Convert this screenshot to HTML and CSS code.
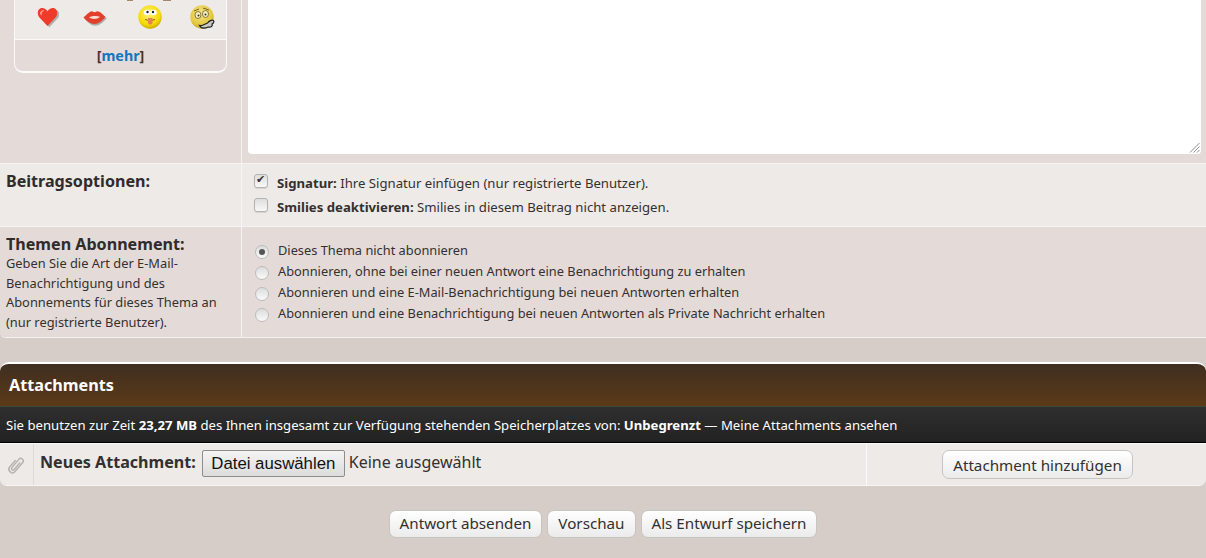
FILE: index.html
```html
<!DOCTYPE html>
<html lang="de">

<head>
    <meta charset="UTF-8">
    <title>Antwort erstellen</title>
    <link rel="stylesheet" href="styles.css">
</head>

<body>

    <div class="form-panel">
        <div class="form-row row-editor">
            <div class="cell-label">
                <div class="smilies">
                    <div class="smilies-top">
                        <svg class="smilie-cut" width="44" height="2" viewBox="0 0 44 2">
                            <rect x="0" y="0" width="6" height="1" fill="#a08c68"/>
                            <rect x="36" y="0" width="8" height="1" fill="#a08c68"/>
                        </svg>
                        <div class="smilies-list">
                            <svg class="smilie smilie-heart" width="22" height="21" viewBox="0 0 22 21">
                                <path d="M11.500 20 3 11C0 7 2 2.500 6 2.500 8.500 2.500 10.500 4 11.500 6 12.500 4 14.500 2.500 17 2.500 21 2.500 23 7 20 11Z" fill="#8c9490" opacity=".65" transform="translate(.8 .3)"/>
                                <path d="M10.500 19 2 10C-.5 6.500 1 1 5 1 7.500 1 9.500 2.500 10.500 4.500 11.500 2.500 13.500 1 16 1 20 1 21.500 6.500 19 10Z" fill="#ee3b2c"/>
                                <path d="M3 7C3 4 5.500 2.500 7.500 3.500 5.500 4 4.500 6 4.500 8.500Z" fill="#fb9c8c"/>
                            </svg>
                            <svg class="smilie smilie-lips" width="24" height="17" viewBox="0 0 24 17">
                                <path d="M1.500 9C5 5.500 8 2 10 3 11.500 4 12.500 4 14 3 16 2 20 5.500 23.500 8.500 20 12.500 16 16 12 16 8 16 4 12.500 1.500 9Z" fill="#8c9490" opacity=".7" transform="translate(.3 .8)"/>
                                <path d="M.5 8.500C4.500 5 7.500 1.500 9.500 2.500 11 3.500 12 3.500 13.500 2.500 15.500 1.500 19.500 5 22.500 8 19 12 15.500 15 11.500 15 7.500 15 3.500 12 .5 8.500Z" fill="#e2402c"/>
                                <path d="M6 8.500C8.500 6.500 14 6.500 17 8 14 10.500 9 10.500 6 8.500Z" fill="#fbdcd0"/>
                            </svg>
                            <svg class="smilie smilie-tongue" width="24" height="24" viewBox="0 0 24 24">
                                <defs>
                                    <radialGradient id="faceTongue" cx=".45" cy=".35" r=".7">
                                        <stop offset="0" stop-color="#fff27a"/>
                                        <stop offset=".7" stop-color="#f5d800"/>
                                        <stop offset="1" stop-color="#c09c00"/>
                                    </radialGradient>
                                </defs>
                                <circle cx="12" cy="12" r="11.700" fill="url(#faceTongue)"/>
                                <ellipse cx="9" cy="7.500" rx="3.200" ry="2.800" fill="#fff"/>
                                <ellipse cx="15.500" cy="7.500" rx="3.200" ry="2.800" fill="#fff"/>
                                <circle cx="9.500" cy="7" r="1.200" fill="#222"/>
                                <circle cx="15" cy="7" r="1.200" fill="#222"/>
                                <path d="M7 14.500C9 15.500 15 15.500 17 14.500" stroke="#8a6a00" stroke-width="1" fill="none"/>
                                <path d="M10 13H14.500L14.500 18.500C13.500 20 11 20 10 18.500Z" fill="#e88050"/>
                            </svg>
                            <svg class="smilie smilie-think" width="25" height="24" viewBox="0 0 25 24">
                                <defs>
                                    <radialGradient id="faceThink" cx=".45" cy=".35" r=".7">
                                        <stop offset="0" stop-color="#f0e48c"/>
                                        <stop offset=".7" stop-color="#e6c83c"/>
                                        <stop offset="1" stop-color="#b89a20"/>
                                    </radialGradient>
                                </defs>
                                <circle cx="12" cy="12" r="11.700" fill="url(#faceThink)"/>
                                <ellipse cx="8" cy="10" rx="3" ry="3.500" fill="#f4f0c0" stroke="#6e5a20" stroke-width=".8"/>
                                <ellipse cx="15.500" cy="9" rx="3" ry="3.500" fill="#f4f0c0" stroke="#6e5a20" stroke-width=".8"/>
                                <circle cx="8.500" cy="10.500" r="1" fill="#333"/>
                                <circle cx="15.500" cy="9.500" r="1" fill="#333"/>
                                <path d="M4 6 9 4M13 3 19 5" stroke="#7a6420" stroke-width="1" fill="none"/>
                                <path d="M9.500 20.500C12 21.500 15 19 17.500 18 19 16 22 14.500 23.500 15.500 24.500 17 23 18.500 22 19 23 21 21 22.500 18.500 22 15 23.500 11 23.500 9.500 20.500Z" fill="#c8c8c4" stroke="#222" stroke-width="1.200"/>
                            </svg>
                        </div>
                    </div>
                    <div class="smilies-more">[<a href="#">mehr</a>]</div>
                </div>
            </div>
            <div class="cell-value editor-cell">
                <div class="editor-box">
                    <svg class="resize-grip" width="11" height="11" viewBox="0 0 11 11">
                        <path d="M10.500 1 1 10.500M10.500 4.500 4.500 10.500M10.500 8 8 10.500" stroke="#8d8d8d" stroke-width="1"/>
                    </svg>
                </div>
            </div>
        </div>

        <div class="form-row row-light row-options">
            <div class="cell-label">
                <h3 class="field-title">Beitragsoptionen:</h3>
            </div>
            <div class="cell-value options-cell">
                <label class="check-line"><input type="checkbox" checked><span><b>Signatur:</b> Ihre Signatur einfügen (nur registrierte Benutzer).</span></label>
                <label class="check-line"><input type="checkbox"><span><b>Smilies deaktivieren:</b> Smilies in diesem Beitrag nicht anzeigen.</span></label>
            </div>
        </div>

        <div class="form-row row-subscribe">
            <div class="cell-label">
                <h3 class="field-title">Themen Abonnement:</h3>
                <p class="field-help">Geben Sie die Art der E-Mail-Benachrichtigung und des Abonnements für dieses Thema an (nur registrierte Benutzer).</p>
            </div>
            <div class="cell-value radios-cell">
                <label class="radio-line"><input type="radio" name="sub" checked><span>Dieses Thema nicht abonnieren</span></label>
                <label class="radio-line"><input type="radio" name="sub"><span>Abonnieren, ohne bei einer neuen Antwort eine Benachrichtigung zu erhalten</span></label>
                <label class="radio-line"><input type="radio" name="sub"><span>Abonnieren und eine E-Mail-Benachrichtigung bei neuen Antworten erhalten</span></label>
                <label class="radio-line"><input type="radio" name="sub"><span>Abonnieren und eine Benachrichtigung bei neuen Antworten als Private Nachricht erhalten</span></label>
            </div>
        </div>
    </div>

    <div class="attach-panel">
        <div class="attach-head">Attachments</div>
        <div class="attach-info">Sie benutzen zur Zeit <b>23,27 MB</b> des Ihnen insgesamt zur Verfügung stehenden Speicherplatzes von: <b>Unbegrenzt</b> — Meine Attachments ansehen</div>
        <div class="attach-row">
            <div class="attach-icon">
                <svg width="20" height="22" viewBox="0 0 20 22">
                    <g transform="rotate(40 10 11)">
                        <path d="M6.500 8V17C6.500 21 13.500 21 13.500 17V5C13.500 1.500 8.500 1.500 8.500 5V16C8.500 17.500 11.500 17.500 11.500 16V7" fill="none" stroke="#b7b4b1" stroke-width="1.500" stroke-linecap="round"/>
                    </g>
                </svg>
            </div>
            <div class="attach-field">
                <b class="attach-label">Neues Attachment:</b>
                <button class="file-button" type="button">Datei auswählen</button>
                <span class="file-name">Keine ausgewählt</span>
            </div>
            <div class="attach-action">
                <button class="soft-button" type="button">Attachment hinzufügen</button>
            </div>
        </div>
    </div>

    <div class="form-actions">
        <button class="soft-button" type="button">Antwort absenden</button>
        <button class="soft-button" type="button">Vorschau</button>
        <button class="soft-button" type="button">Als Entwurf speichern</button>
    </div>

</body>

</html>
```

FILE: styles.css
```css
body {
    margin: 0;
    height: 558px;
    overflow: hidden;
    background-color: #d6ccc8;
    color: #34302f;
    font-family: 'Noto Sans', sans-serif;
    font-size: 12.800px;
}

.form-panel {
    border-bottom: 1px solid #f4f1ef;
    border-bottom-left-radius: 6px;
    overflow: hidden;
}

.form-row {
    display: flex;
    background-color: #e4dbd9;
    border-bottom: 1px solid #f6f3f1;
}

.form-row:last-child {
    border-bottom: none;
}

.row-light {
    background-color: #eeeae7;
}

.cell-label {
    box-sizing: border-box;
    width: 242px;
    flex-shrink: 0;
    padding: 8px 6px;
    border-right: 1px solid #f6f3f1;
}

.cell-value {
    flex: 1;
}

.row-editor {
    height: 163px;
}

.row-editor .cell-label {
    padding: 0 14px;
}

.smilies {
    height: 73px;
    box-sizing: border-box;
    border: 1px solid #fbfaf9;
    border-top: none;
    border-bottom-width: 2px;
    border-radius: 0 0 9px 9px;
    overflow: hidden;
}

.smilies-top {
    position: relative;
    height: 40px;
    background-color: #eeeae7;
    border-bottom: 1px solid #fbfaf9;
    box-sizing: border-box;
}

.smilie-cut {
    position: absolute;
    left: 112px;
    top: 0;
}

.smilies-list {
    position: absolute;
    top: 5px;
    left: 22px;
    display: flex;
    align-items: center;
    height: 24px;
}

.smilie-heart {
    margin-right: 24px;
}

.smilie-lips {
    margin-right: 31px;
}

.smilie-tongue {
    margin-right: 28px;
}

.smilies-more {
    text-align: center;
    font-size: 14.300px;
    font-weight: bold;
    line-height: 31px;
    color: #4a3327;
}

.smilies-more a {
    color: #0f76c0;
    text-decoration: none;
}

.editor-cell {
    padding: 0 5px 9px 6px;
}

.editor-box {
    position: relative;
    height: 100%;
    background-color: #fff;
    border-radius: 0 0 4px 4px;
}

.resize-grip {
    position: absolute;
    right: 1px;
    bottom: 1px;
}

.row-options {
    height: 62px;
}

.row-options .cell-label {
    padding-top: 7px;
}

.field-title {
    margin: 0;
    font-size: 16.100px;
    line-height: 21px;
    font-weight: bold;
    color: #302c2b;
}

.row-subscribe {
    height: 110px;
}

.row-subscribe .cell-label {
    padding-top: 7px;
}

.field-help {
    margin: -1px 0 0;
    line-height: 19.500px;
    font-size: 12.850px;
}

.options-cell {
    padding: 7px 0 0 12px;
    font-size: 13.170px;
}

.check-line {
    display: flex;
    align-items: center;
    height: 23px;
    margin-bottom: 1px;
}

.check-line input {
    appearance: none;
    box-sizing: border-box;
    position: relative;
    width: 14px;
    height: 14px;
    margin: 0 9px 3px 0;
    border: 1px solid #b4b2b1;
    border-radius: 3px;
    background: linear-gradient(#dedede, #f8f8f8);
    box-shadow: 0 1px 1px rgba(0, 0, 0, 0.1);
}

.check-line input:checked::after {
    content: "✔";
    position: absolute;
    left: 1px;
    top: -3px;
    font-size: 11px;
    line-height: 14px;
    color: #333;
}

.radios-cell {
    padding: 12px 0 0 13px;
}

.radio-line {
    display: flex;
    align-items: center;
    height: 21px;
}

.radio-line input {
    appearance: none;
    box-sizing: border-box;
    position: relative;
    width: 14px;
    height: 14px;
    margin: 5px 9px 0 0;
    border: 1px solid #bdbbb9;
    border-radius: 50%;
    background: linear-gradient(#dcdcdc, #fafafa);
}

.radio-line input:checked::after {
    content: "";
    position: absolute;
    left: 3px;
    top: 3px;
    width: 6px;
    height: 6px;
    border-radius: 50%;
    background-color: #555;
}

.attach-panel {
    margin-top: 24px;
    border-top: 2px solid #fff;
    border-radius: 9px 9px 7px 7px;
    overflow: hidden;
    border-bottom: 1px solid #f8f6f5;
}

.attach-head {
    box-sizing: border-box;
    height: 42px;
    padding-left: 9px;
    background: linear-gradient(#3f2e20, #5b3a18);
    color: #fff;
    font-size: 16.200px;
    font-weight: bold;
    line-height: 42px;
}

.attach-info {
    box-sizing: border-box;
    height: 37px;
    padding-left: 6px;
    background: linear-gradient(#2f2f2f, #222);
    border-top: 1px solid #3c4a3c;
    border-bottom: 1px solid #000;
    color: #fff;
    font-size: 13.150px;
    line-height: 36px;
}

.attach-row {
    display: flex;
    height: 41px;
    background-color: #eeeae7;
    border-top: 1px solid #fbfafa;
}

.attach-icon {
    display: flex;
    align-items: center;
    justify-content: center;
    box-sizing: border-box;
    width: 34px;
    padding-right: 1px;
    border-right: 1px solid #dedad7;
}

.attach-field {
    display: flex;
    align-items: center;
    box-sizing: border-box;
    width: 833px;
    padding: 0 0 2px 6px;
    border-right: 1px solid #fbfafa;
}

.attach-label {
    margin: 0 6px 3px 0;
    font-size: 16.100px;
}

.file-button {
    box-sizing: border-box;
    height: 27px;
    width: 143px;
    padding: 0;
    margin-right: 4px;
    border: 1px solid #8d8d8d;
    border-radius: 2px;
    background: linear-gradient(#f4f4f4, #dcdcdc);
    color: #111;
    font-family: 'Liberation Sans', sans-serif;
    font-size: 16.800px;
}

.file-name {
    margin-bottom: 3px;
    font-size: 16px;
}

.attach-action {
    flex: 1;
    display: flex;
    justify-content: center;
    align-items: center;
    padding-left: 2px;
}

.soft-button {
    box-sizing: border-box;
    height: 29px;
    padding: 0 10px;
    border: 1px solid #c8c4c2;
    border-radius: 7px;
    background: linear-gradient(#fff, #ebebeb);
    color: #34302f;
    font-family: 'Noto Sans', sans-serif;
    font-size: 15.200px;
}

.form-actions {
    display: flex;
    justify-content: center;
    gap: 5px;
    padding-top: 24px;
}

.form-actions .soft-button {
    height: 28px;
    padding-bottom: 2px;
}
```
